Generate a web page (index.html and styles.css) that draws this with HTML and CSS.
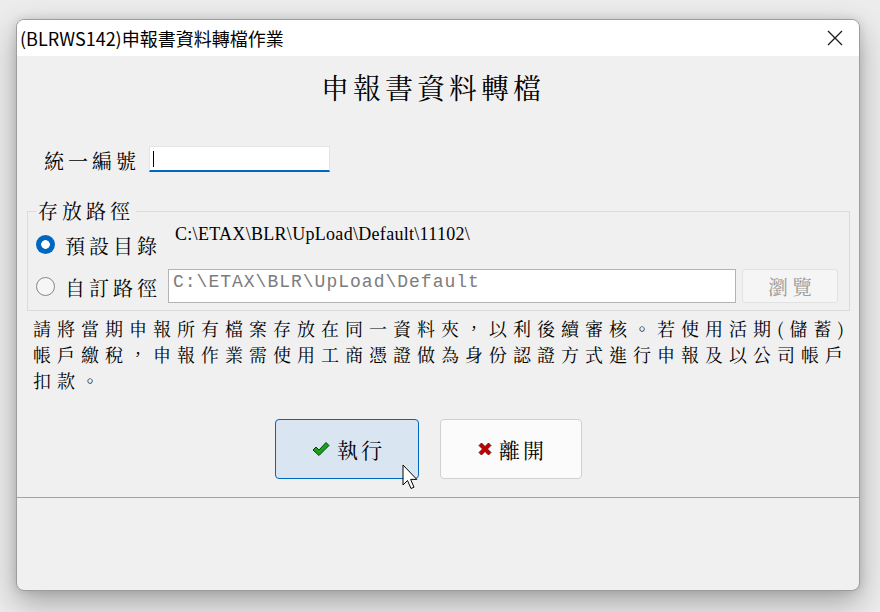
FILE: index.html
```html
<!DOCTYPE html>
<html lang="zh-Hant">

<head>
    <meta charset="UTF-8">
    <title>(BLRWS142)申報書資料轉檔作業</title>
    <link rel="stylesheet" href="styles.css">
</head>

<body>
    <div class="window">
        <div class="titlebar">
            <span class="title">(BLRWS142)申報書資料轉檔作業</span>
            <svg class="close" width="16" height="16" viewBox="0 0 16 16">
                <path d="M1 1L15 15M15 1L1 15" stroke="#1a1a1a" stroke-width="1.3" fill="none" />
            </svg>
        </div>
        <div class="content">
            <h1 class="heading">申報書資料轉檔</h1>
            <div class="id_row">
                <span class="field_label">統一編號</span>
                <div class="text_input"><span class="caret"></span></div>
            </div>
            <fieldset class="group">
                <legend>存放路徑</legend>
                <div class="opt_row first">
                    <span class="radio checked"></span>
                    <span class="opt_label">預設目錄</span>
                    <span class="path">C:\ETAX\BLR\UpLoad\Default\11102\</span>
                </div>
                <div class="opt_row second">
                    <span class="radio"></span>
                    <span class="opt_label">自訂路徑</span>
                    <div class="path_input">C:\ETAX\BLR\UpLoad\Default</div>
                    <button class="browse" disabled>瀏覽</button>
                </div>
            </fieldset>
            <p class="note">請將當期申報所有檔案存放在同一資料夾，以利後續審核。若使用活期(儲蓄)<br>帳戶繳稅，申報作業需使用工商憑證做為身份認證方式進行申報及以公司帳戶<br>扣款。</p>
            <div class="actions">
                <button class="btn primary">
                    <svg width="18" height="16" viewBox="0 0 18 16">
                        <path d="M1 9L4 6L7 9L14 1.5L17 4.5L7 14.5Z" fill="#17a317" stroke="#0b3d0b" stroke-width="1" stroke-linejoin="round" />
                    </svg>
                    <span>執行</span>
                </button>
                <button class="btn">
                    <svg width="14" height="14" viewBox="0 0 14 14">
                        <path d="M1 3.5L3.5 1L7 4.5L10.5 1L13 3.5L9.5 7L13 10.5L10.5 13L7 9.5L3.5 13L1 10.5L4.5 7Z" fill="#c40000" stroke="#5a0000" stroke-width="0.8" stroke-linejoin="round" />
                    </svg>
                    <span>離開</span>
                </button>
            </div>
        </div>
        <div class="statusbar"></div>
    </div>
    <svg class="cursor" width="17" height="27" viewBox="0 0 17 27">
        <path d="M1 1L1 21L5.5 16.5L9 24.5L12 23.2L8.6 15.4L14.8 15.4Z" fill="#fff" stroke="#000" stroke-width="1" stroke-linejoin="round" />
    </svg>
</body>

</html>
```

FILE: styles.css
```css
* {
    margin: 0;
    padding: 0;
    box-sizing: border-box;
}

body {
    position: relative;
    height: 612px;
    overflow: hidden;
    background: #ececec;
    font-family: "Noto Serif CJK TC", "Noto Sans CJK TC", serif;
    color: #000;
}

.window {
    margin: 19px 0 0 16px;
    width: 844px;
    height: 572px;
    border: 1px solid #9d9d9d;
    border-radius: 8px;
    overflow: hidden;
    background: #f0f0f0;
    display: flex;
    flex-direction: column;
    box-shadow: 0 12px 30px rgba(0, 0, 0, 0.3), 0 0 10px rgba(0, 0, 0, 0.12);
}

.titlebar {
    height: 36px;
    background: #fff;
    display: flex;
    align-items: center;
    justify-content: space-between;
    padding: 0 16px 0 3px;
}

.title {
    font-family: "Noto Sans CJK TC", "Noto Sans", sans-serif;
    font-size: 18px;
    line-height: 36px;
}

.close {
    display: block;
}

.heading {
    margin-top: 11px;
    line-height: 40px;
    font-size: 28px;
    font-weight: normal;
    letter-spacing: 4px;
    text-align: center;
    padding-right: 10px;
}

.id_row {
    margin-top: 36px;
    padding-left: 27px;
    display: flex;
    align-items: center;
}

.field_label,
.opt_label,
legend {
    font-size: 20px;
    letter-spacing: 4px;
}

.field_label {
    width: 105px;
    padding-top: 3px;
}

.text_input {
    width: 181px;
    height: 26px;
    background: #fff;
    border: 1px solid #e4e4e4;
    border-bottom: 2px solid #0067c0;
    display: flex;
    align-items: center;
    padding-left: 3px;
}

.caret {
    width: 1px;
    height: 16px;
    background: #000;
}

.group {
    margin: 25px 9px 0 10px;
    min-width: 0;
    border: 1px solid #dcdcdc;
    padding: 0 11px 7px 8px;
}

.group legend {
    padding: 0 2px;
    line-height: 22px;
}

.opt_row {
    display: flex;
    align-items: center;
}

.opt_row.first {
    margin-top: 2px;
    height: 40px;
}

.opt_row.second {
    margin-top: 5px;
    height: 34px;
}

.radio {
    width: 19px;
    height: 19px;
    border-radius: 50%;
    border: 1px solid #858585;
    background: #f6f6f6;
    margin-right: 10px;
    flex: none;
}

.radio.checked {
    border: none;
    background: radial-gradient(circle, #fff 0, #fff 4px, #0067c0 4.6px);
}

.opt_label {
    width: 103px;
    padding-top: 3px;
}

.path {
    align-self: flex-start;
    margin-left: 7px;
    line-height: 20px;
    font-family: "Liberation Serif", serif;
    font-size: 18px;
    letter-spacing: 0.3px;
}

.path_input {
    flex: 1;
    height: 34px;
    background: #fff;
    border: 1px solid #b4b4b4;
    padding-left: 4px;
    font-family: "Liberation Mono", monospace;
    font-size: 18px;
    letter-spacing: 1px;
    line-height: 24px;
    color: #7c7c7c;
}

.browse {
    width: 96px;
    height: 34px;
    margin-left: 6px;
    border: 1px solid #e2e2e2;
    border-radius: 3px;
    background: #f5f5f5;
    color: #9c9c9c;
    font-family: inherit;
    font-size: 20px;
    letter-spacing: 4px;
    padding-left: 4px;
}

.note {
    margin-top: 4px;
    padding-left: 16px;
    font-size: 18px;
    letter-spacing: 6px;
    line-height: 26px;
    white-space: nowrap;
}

.actions {
    margin-top: 26px;
    margin-bottom: 18px;
    display: flex;
    justify-content: center;
    gap: 21px;
    padding-right: 19px;
}

.btn {
    width: 142px;
    height: 60px;
    border: 1px solid #d0d0d0;
    border-radius: 4px;
    background: #fbfbfb;
    display: flex;
    align-items: center;
    justify-content: center;
    gap: 7px;
    font-family: inherit;
    font-size: 21px;
    letter-spacing: 3px;
    color: #000;
}

.btn span {
    margin-right: -3px;
}

.btn.primary {
    width: 144px;
    background: #d9e5f1;
    border-color: #0067c0;
}

.statusbar {
    flex: 1;
    border-top: 1px solid #a4a4a4;
}

.cursor {
    position: absolute;
    left: 402px;
    top: 464px;
}
```
